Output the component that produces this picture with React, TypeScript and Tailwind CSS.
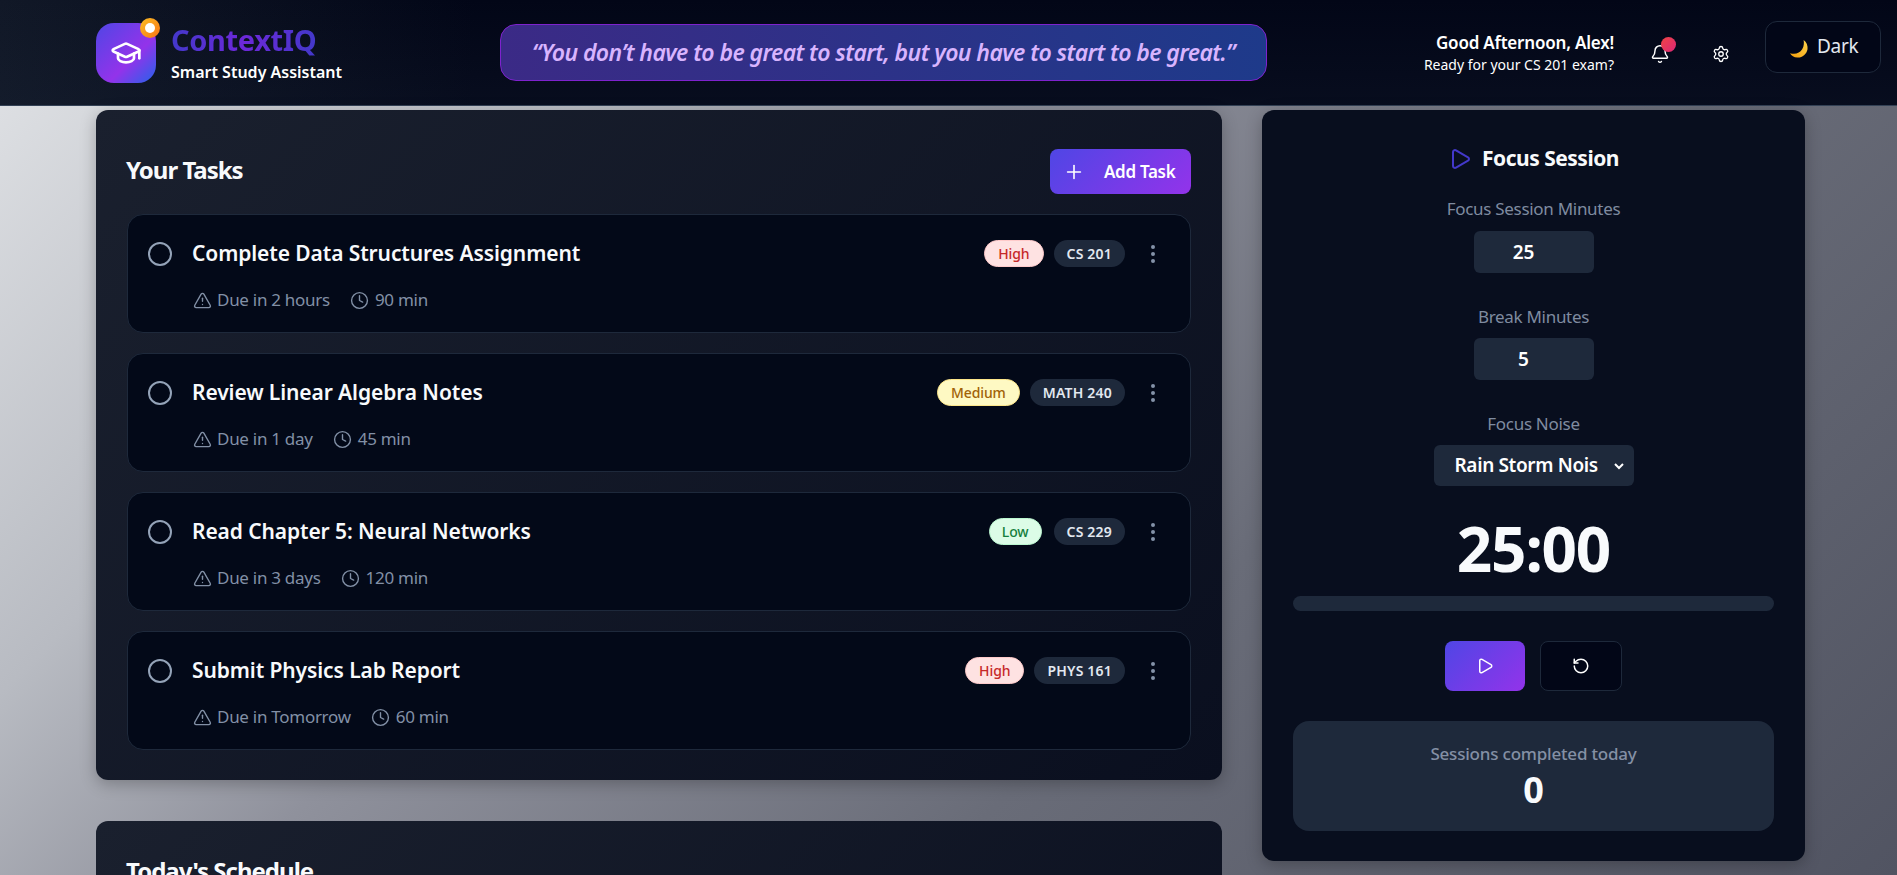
import { GraduationCap, Bell, Settings, Play, Plus, RotateCcw, TriangleAlert, Clock, EllipsisVertical } from "lucide-react";

const tasks = [
  { title: "Complete Data Structures Assignment", due: "Due in 2 hours", mins: "90 min", pr: "High", course: "CS 201" },
  { title: "Review Linear Algebra Notes", due: "Due in 1 day", mins: "45 min", pr: "Medium", course: "MATH 240" },
  { title: "Read Chapter 5: Neural Networks", due: "Due in 3 days", mins: "120 min", pr: "Low", course: "CS 229" },
  { title: "Submit Physics Lab Report", due: "Due in Tomorrow", mins: "60 min", pr: "High", course: "PHYS 161" },
];

const prClass: Record<string, string> = {
  High: "bg-[#fee2e2] border-[#fecaca] text-[#c62828] px-[13px]",
  Medium: "bg-[#fef9c3] border-[#fde68a] text-[#a16207] px-[13px]",
  Low: "bg-[#dcfce7] border-[#bbf7d0] text-[#15803d] px-[12px] mr-[2px]",
};

function TaskRow({ t }: { t: (typeof tasks)[number] }) {
  return (
    <div className="h-[119px] rounded-2xl border border-[#1e293b] bg-[#030918] pl-[20px] pr-[25px] pt-[20px]">
      <div className="flex h-[37px] items-center">
        <span className="h-[24px] w-[24px] shrink-0 rounded-full border-2 border-[#94a3b8]" />
        <h3 className="ml-[20px] text-[21px] font-semibold tracking-[-0.1px] text-[#f8fafc]">{t.title}</h3>
        <span className={`ml-auto flex h-[27px] items-center rounded-full border text-[14px] font-medium tracking-[-0.1px] ${prClass[t.pr]}`}>{t.pr}</span>
        <span className="ml-[10px] flex h-[27px] items-center rounded-full bg-[#1e293b] px-[13px] text-[14px] font-semibold tracking-[0.2px] text-[#e2e8f0]">{t.course}</span>
        <EllipsisVertical className="ml-[16px] h-[24px] w-[24px] text-[#8492a8]" strokeWidth={2} />
      </div>
      <div className="ml-[45px] mt-[16px] flex items-center text-[17px] leading-[24px] tracking-[-0.28px] text-[#8290a6]">
        <TriangleAlert className="h-[19px] w-[19px]" strokeWidth={1.75} />
        <span className="ml-[5px]">{t.due}</span>
        <Clock className="ml-[20px] h-[19px] w-[19px]" strokeWidth={1.75} />
        <span className="ml-[6px]">{t.mins}</span>
      </div>
    </div>
  );
}

function FieldLabel({ children }: { children: string }) {
  return <label className="block text-center text-[17px] leading-[24px] tracking-[-0.3px] text-[#7f8ba0]">{children}</label>;
}

export default function App() {
  return (
    <div className="h-screen overflow-hidden bg-[linear-gradient(135deg,#e3e5e8_0%,#b8bbc2_25%,#8f919c_40%,#696c78_65%,#515462_100%)] font-['Noto_Sans','Open_Sans',sans-serif]">
      <header className="flex h-[106px] items-center border-b border-[#334155] bg-[linear-gradient(to_bottom,transparent,rgba(30,41,59,0.2)),linear-gradient(90deg,#111827,#020617_25%,#020617_100%)] pl-[96px] pr-[16px]">
        <div className="relative flex h-[60px] w-[60px] shrink-0 items-center justify-center rounded-[18px] bg-[linear-gradient(135deg,#4f46e5,#9333ea_60%,#2563eb)]">
          <GraduationCap className="h-[32px] w-[32px] text-white" strokeWidth={2} />
          <span className="absolute right-[-4px] top-[-5px] flex h-[20px] w-[20px] items-center justify-center rounded-full bg-[linear-gradient(135deg,#fbbf24,#f97316)]">
            <span className="h-[10px] w-[10px] rounded-full bg-white" />
          </span>
        </div>
        <div className="ml-[15px] w-[329px] shrink-0">
          <div className="w-fit bg-[linear-gradient(90deg,#4338ca,#6d28d9,#4338ca)] bg-clip-text text-[29px] font-bold leading-[34px] tracking-[-0.35px] text-transparent">ContextIQ</div>
          <div className="mt-[4px] text-[16px] font-semibold leading-[22px] text-white">Smart Study Assistant</div>
        </div>
        <div className="flex h-[57px] w-[767px] shrink-0 items-center justify-center rounded-2xl border border-[#7e22ce] bg-[linear-gradient(90deg,#3b2a86,#1e3a8a)] text-[23px] font-semibold italic tracking-[-0.58px] text-[#d8b4fe]">
          “You don’t have to be great to start, but you have to start to be great.”
        </div>
        <div className="ml-auto text-right">
          <div className="mt-[1px] text-[17px] font-semibold leading-[24px] tracking-[-0.2px] text-white">Good Afternoon, Alex!</div>
          <div className="text-[14px] leading-[20px] text-white">Ready for your CS 201 exam?</div>
        </div>
        <div className="relative ml-[36px] mt-[2px]">
          <Bell className="h-[20px] w-[20px] text-white" strokeWidth={1.75} />
          <span className="absolute right-[-6px] top-[-7px] h-[15px] w-[15px] rounded-full bg-[linear-gradient(135deg,#ef4444,#db2777)]" />
        </div>
        <Settings className="ml-[42px] mt-[2px] h-[18px] w-[18px] text-white" strokeWidth={1.75} />
        <button className="mb-[12px] ml-[35px] flex h-[52px] w-[116px] items-center rounded-xl border border-[#1e293b] bg-[#020617] pl-[24px] text-[19px] tracking-[-0.3px] text-[#e2e8f0]">
          <svg viewBox="0 0 18.500 18.500" className="mt-[4px] h-[18px] w-[18px]">
            <defs>
              <linearGradient id="moon" x1="1" y1="0" x2="0" y2="1">
                <stop offset="0" stopColor="#fcd34d" />
                <stop offset="1" stopColor="#f59e0b" />
              </linearGradient>
            </defs>
            <path d="M14 0C17 2 18.500 6 18 9.500C17 15 12 18.500 7.500 18C4 17.800 1.500 16 0 13.500C5.500 15 10 13.500 12.500 9.500C14.500 6.500 14.500 3 14 0z" fill="url(#moon)" />
          </svg>
          <span className="ml-[9px]">Dark</span>
        </button>
      </header>

      <main className="flex items-start gap-[40px] pl-[96px] pt-[4px]">
        <div className="flex w-[1126px] shrink-0 flex-col gap-[41px]">
          <section className="h-[670px] rounded-xl bg-[linear-gradient(135deg,#1a202e,#0a0f1f)] px-[31px] pt-[39px] shadow-[0_4px_16px_rgba(0,0,0,0.25)]">
            <div className="flex h-[45px] items-center justify-between">
              <h2 className="-ml-[1px] mb-[4px] text-[24px] font-bold tracking-[-1px] text-[#f8fafc]">Your Tasks</h2>
              <button className="flex h-[45px] w-[141px] items-center rounded-lg bg-[linear-gradient(135deg,#4f46e5,#9333ea)] pl-[13px] text-[17px] font-semibold tracking-[-0.3px] text-white">
                <Plus className="h-[22px] w-[22px]" strokeWidth={1.75} />
                <span className="ml-[19px]">Add Task</span>
              </button>
            </div>
            <div className="mt-[20px] flex flex-col gap-[20px]">
              {tasks.map((t) => <TaskRow key={t.title} t={t} />)}
            </div>
          </section>
          <section className="h-[400px] rounded-xl bg-[linear-gradient(135deg,#1a202e,#0a0f1f)] px-[30px] pt-[32px]">
            <h2 className="text-[24px] font-bold tracking-[-1px] text-[#f8fafc]">Today's Schedule</h2>
          </section>
        </div>

        <aside className="h-[751px] w-[543px] shrink-0 rounded-xl bg-[#080e1e] px-[31px] pt-[33px] shadow-[0_4px_16px_rgba(0,0,0,0.25)]">
          <div className="flex h-[32px] items-center justify-center">
            <Play className="h-[24px] w-[24px] text-[#4338ca]" strokeWidth={2} />
            <h2 className="ml-[10px] text-[21px] font-bold tracking-[-0.5px] text-[#f8fafc]">Focus Session</h2>
          </div>
          <div className="mt-[22px]"><FieldLabel>Focus Session Minutes</FieldLabel></div>
          <input readOnly value="25" className="mx-auto mt-[10px] block h-[42px] w-[120px] rounded-md bg-[#1e293b] pr-[20px] text-center text-[19px] font-semibold text-white outline-none" />
          <div className="mt-[32px]"><FieldLabel>Break Minutes</FieldLabel></div>
          <input readOnly value="5" className="mx-auto mt-[9px] block h-[42px] w-[120px] rounded-md bg-[#1e293b] pr-[20px] text-center text-[19px] font-semibold text-white outline-none" />
          <div className="mt-[32px]"><FieldLabel>Focus Noise</FieldLabel></div>
          <div className="relative mx-auto mt-[9px] h-[41px] w-[200px]">
            <select className="h-full w-full appearance-none overflow-hidden rounded-md bg-[#1e293b] pl-[21px] pr-[36px] text-[19px] font-semibold tracking-[-0.35px] text-white outline-none">
              <option>Rain Storm Noise</option>
            </select>
            <svg viewBox="0 0 12 12" className="pointer-events-none absolute right-[9px] top-[15px] h-[12px] w-[12px] text-white" fill="none" stroke="currentColor" strokeWidth="2">
              <path d="M2 4l4 4 4-4" />
            </svg>
          </div>
          <div className="mt-[22px] text-center text-[62px] font-bold leading-[80px] tracking-[-1.2px] text-[#f8fafc]">25:00</div>
          <div className="mt-[8px] h-[15px] rounded-full bg-[#1e293b]" />
          <div className="mt-[30px] flex justify-center gap-[15px]">
            <button className="flex h-[50px] w-[80px] items-center justify-center rounded-lg bg-[linear-gradient(135deg,#4f46e5,#9333ea)] text-white">
              <Play className="h-[18px] w-[18px]" strokeWidth={2} />
            </button>
            <button className="flex h-[50px] w-[82px] items-center justify-center rounded-lg border border-[#1e293b] bg-[#020617] text-white">
              <RotateCcw className="h-[18px] w-[18px]" strokeWidth={2} />
            </button>
          </div>
          <div className="mt-[30px] flex h-[110px] flex-col items-center rounded-2xl bg-[#1e293b] pt-[21px]">
            <div className="text-[17px] font-medium leading-[24px] tracking-[-0.2px] text-[#8490a5]">Sessions completed today</div>
            <div className="mt-[4px] text-[36px] font-bold leading-[40px] text-[#f8fafc]">0</div>
          </div>
        </aside>
      </main>
    </div>
  );
}
